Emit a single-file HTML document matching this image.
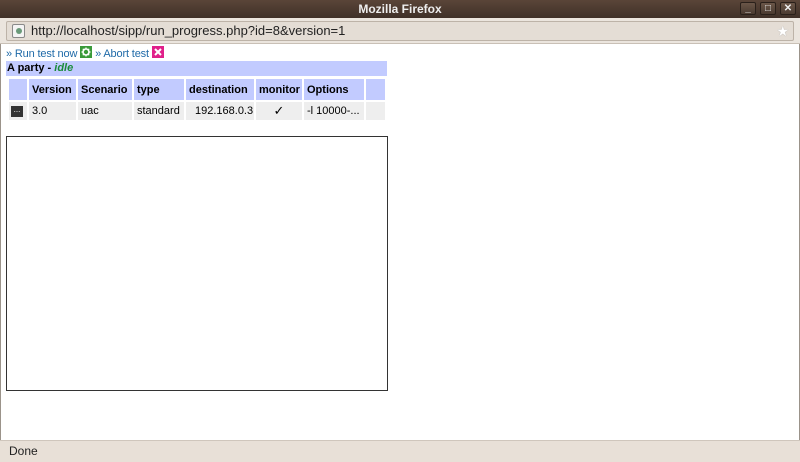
<!DOCTYPE html>
<html><head><meta charset="utf-8"><style>
*{margin:0;padding:0;box-sizing:border-box}
body{width:800px;height:462px;overflow:hidden;font-family:"Liberation Sans",sans-serif;background:#fff;position:relative}
.title{position:absolute;left:0;top:0;width:800px;height:18px;background:linear-gradient(#5a4538,#3f3028);color:#eee;font-weight:bold;font-size:12px;text-align:center;line-height:18px}
.wb{position:absolute;top:2px;width:16px;height:13px;border:1px solid #2a201a;background:linear-gradient(#6a5648,#4a3a30);color:#eee;font-size:10px;line-height:11px;text-align:center;border-radius:2px}
.tool{position:absolute;left:0;top:18px;width:800px;height:26px;background:#ebe5de;border-bottom:1px solid #c9c0b6}
.url{position:absolute;left:6px;top:3px;width:788px;height:20px;background:#e4ddd5;border:1px solid #bdb3a8;border-radius:2px;font-size:13px;line-height:18px;padding-left:24px;color:#222}
.fav{position:absolute;left:5px;top:2px;width:13px;height:14px;border:1px solid #8a8a8a;background:#f4f4f4;border-radius:2px}
.fav:after{content:"";position:absolute;left:3px;top:3px;width:6px;height:6px;border-radius:50%;background:#6a9a7a}
.content{position:absolute;left:0;top:44px;width:800px;height:396px;border-left:1px solid #9b938a;border-right:1px solid #9b938a}
.links{position:absolute;left:5px;top:2px;font-size:11px;color:#1f6aa8;line-height:13px;letter-spacing:-0.15px}
.bar{position:absolute;left:5px;top:17px;width:381px;height:15px;background:#c2cbff;font-size:11px;font-weight:bold;line-height:15px;padding-left:1px}
.bar i{color:#1a8a3a}
table{position:absolute;left:6px;top:33px;border-collapse:separate;border-spacing:2px;font-size:11px;table-layout:fixed;width:380px}
th{background:#c2cbff;height:21px;text-align:left;padding:0 3px;overflow:hidden;white-space:nowrap}
td{background:#eee;height:18px;padding:0 3px;overflow:hidden;white-space:nowrap}
.frame{position:absolute;left:5px;top:92px;width:382px;height:255px;border:1px solid #333}
.status{position:absolute;left:0;top:440px;width:800px;height:22px;background:#e8e0d7;border-top:1px solid #cfc6bc;font-size:12px;line-height:20px;padding-left:9px;color:#222}
</style></head><body>
<div class="title">Mozilla Firefox
<div class="wb" style="left:740px">_</div><div class="wb" style="left:760px">□</div><div class="wb" style="left:780px">✕</div></div>
<div class="tool"><div class="url"><div class="fav"></div>http://localhost/sipp/run_progress.php?id=8&amp;version=1<span style="position:absolute;right:4px;top:0;color:#fff;font-size:14px;text-shadow:0 0 1px #999">★</span></div></div>
<div class="content">
<div class="links">» Run test now <svg width="12" height="12" style="vertical-align:-1px"><rect width="12" height="12" fill="#3a9a3a"/><circle cx="6" cy="6" r="3" fill="none" stroke="#fff" stroke-width="1.6"/><path d="M6 1.5V3M6 9V10.5M1.5 6H3M9 6H10.5M2.8 2.8L3.9 3.9M8.1 8.1L9.2 9.2M2.8 9.2L3.9 8.1M8.1 3.9L9.2 2.8" stroke="#fff" stroke-width="1.2"/></svg> » Abort test <svg width="12" height="12" style="vertical-align:-1px"><rect width="12" height="12" fill="#e0208a"/><path d="M3 3L9 9M9 3L3 9" stroke="#fff" stroke-width="2"/></svg></div>
<div class="bar">A party - <i>idle</i></div>
<table>
<colgroup><col style="width:18px"><col style="width:47px"><col style="width:54px"><col style="width:50px"><col style="width:68px"><col style="width:46px"><col style="width:60px"><col style="width:19px"></colgroup>
<tr><th></th><th>Version</th><th>Scenario</th><th>type</th><th>destination</th><th>monitor</th><th>Options</th><th></th></tr>
<tr><td style="padding:0 2px"><div style="width:12px;height:11px;background:#333;color:#fff;font-size:8px;line-height:7px;text-align:center">...</div></td><td>3.0</td><td>uac</td><td>standard</td><td style="padding-left:9px">192.168.0.3</td><td style="text-align:center;font-size:13px">✓</td><td>-l 10000-...</td><td></td></tr>
</table>
<div class="frame"></div>
</div>
<div class="status">Done</div>
</body></html>
